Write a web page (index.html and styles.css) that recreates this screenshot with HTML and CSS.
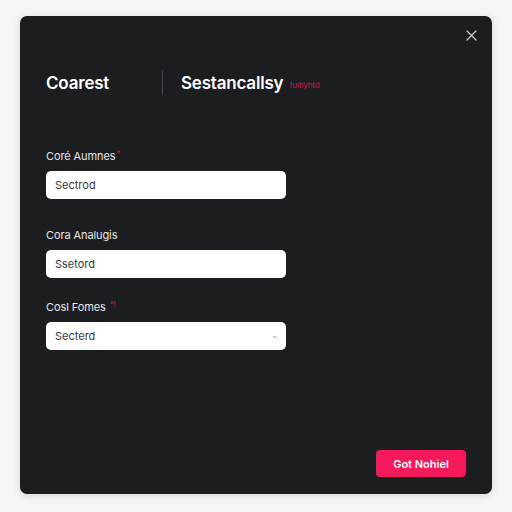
FILE: index.html
```html
<!DOCTYPE html>
<html>
<head>
<meta charset="utf-8">
<link rel="stylesheet" href="styles.css">
</head>
<body>
<div class="modal">
  <button class="close" aria-label="Close">
    <svg width="11" height="11" viewBox="0 0 11 11"><path d="M1 1L10 10M10 1L1 10" stroke="#c9cacd" stroke-width="1.3" stroke-linecap="round"/></svg>
  </button>
  <div class="header">
    <div class="tab">Coarest</div>
    <div class="divider"></div>
    <div class="tab second">Sestancallsy <span class="tag">fuıbyhtd</span></div>
  </div>
  <div class="fields">
    <div class="field f1">
      <label class="label">Coré Aumnes<span class="req">*</span></label>
      <div class="input">Sectrod</div>
    </div>
    <div class="field f2">
      <label class="label">Cora Analugis</label>
      <div class="input">Ssetord</div>
    </div>
    <div class="field">
      <label class="label">Cosl Fomes <span class="req">*!</span></label>
      <div class="input select">Secterd
        <svg class="chev" width="5" height="4" viewBox="0 0 5 4"><path d="M0.8 1L2.5 2.8L4.2 1" stroke="#888" stroke-width="0.9" fill="none"/></svg>
      </div>
    </div>
  </div>
  <div class="spacer"></div>
  <div class="footer">
    <button class="primary">Got Nohiel</button>
  </div>
</div>
</body>
</html>
```
FILE: styles.css
```css
html, body {
  margin: 0;
  padding: 0;
  background: #f6f6f7;
  width: 512px;
  height: 512px;
  font-family: Inter, "Liberation Sans", sans-serif;
}
body {
  box-sizing: border-box;
  padding: 16px 20px 18px 20px;
  display: flex;
}
.modal {
  position: relative;
  flex: 1;
  background: #1c1d21;
  border-radius: 7px;
  box-shadow: 0 2px 10px rgba(0,0,0,0.12);
  display: flex;
  flex-direction: column;
  padding: 0 26px 17px 26px;
}
.close {
  position: absolute;
  top: 14px;
  right: 15px;
  background: none;
  border: 0;
  padding: 0;
  width: 11px;
  height: 11px;
  display: flex;
}
.header {
  display: flex;
  align-items: center;
  margin-top: 55px;
  height: 24px;
}
.tab {
  color: #ffffff;
  font-size: 17px;
  font-weight: 600;
  letter-spacing: -0.2px;
}
.tab:first-child {
  width: 116px;
}
.divider {
  width: 1px;
  height: 24px;
  background: #4a4b50;
  margin-right: 18px;
}
.tag {
  color: #b0173f;
  font-size: 8px;
  font-weight: 500;
  margin-left: 2px;
  vertical-align: 1px;
}
.fields {
  margin-top: 51px;
  display: flex;
  flex-direction: column;
}
.field {
  display: flex;
  flex-direction: column;
  gap: 8px;
}
.f1 { margin-bottom: 29px; }
.f2 { margin-bottom: 19px; }
.label {
  color: #e6e6e8;
  font-size: 11px;
  line-height: 14px;
  letter-spacing: -0.1px;
}
.req {
  color: #c0204c;
  font-size: 8px;
  vertical-align: 4px;
  margin-left: 1px;
}
.input {
  width: 240px;
  height: 28px;
  box-sizing: border-box;
  background: #ffffff;
  border-radius: 5px;
  color: #38383c;
  font-size: 11px;
  display: flex;
  align-items: center;
  padding-left: 9px;
  padding-right: 9px;
}
.select {
  justify-content: space-between;
}
.chev { margin-top: 2px; }
.spacer { flex: 1; }
.footer {
  display: flex;
  justify-content: flex-end;
}
.primary {
  width: 90px;
  height: 27px;
  border: 0;
  border-radius: 4px;
  background: #f3195a;
  color: #ffffff;
  font-family: Inter, "Liberation Sans", sans-serif;
  font-size: 11px;
  font-weight: 600;
}
```
